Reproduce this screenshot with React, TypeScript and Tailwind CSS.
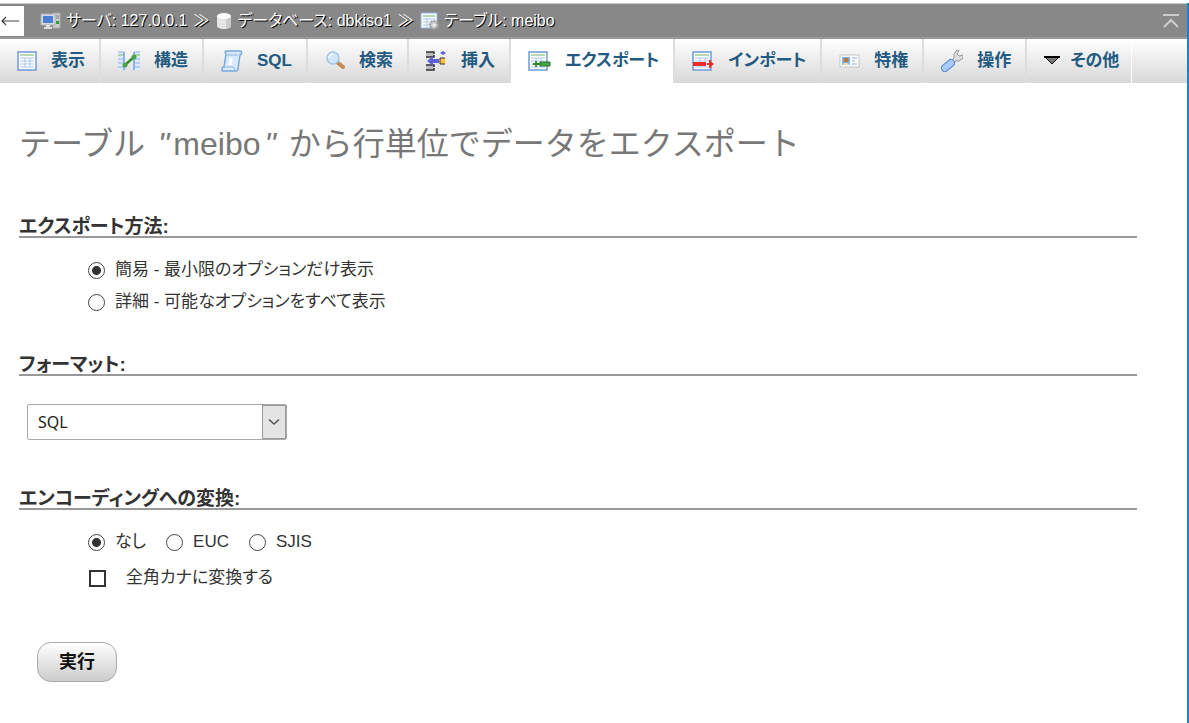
import React, { useState } from "react";

const TABS = [
  { label: "表示", icon: <BrowseIcon /> },
  { label: "構造", icon: <StructureIcon /> },
  { label: "SQL", icon: <SqlIcon /> },
  { label: "検索", icon: <SearchIcon /> },
  { label: "挿入", icon: <InsertIcon /> },
  { label: "エクスポート", icon: <ExportIcon />, active: true },
  { label: "インポート", icon: <ImportIcon /> },
  { label: "特権", icon: <PrivilegesIcon /> },
  { label: "操作", icon: <WrenchIcon /> },
];

const METHODS = [
  { value: "quick", label: "簡易 - 最小限のオプションだけ表示" },
  { value: "custom", label: "詳細 - 可能なオプションをすべて表示" },
];

const ENCODINGS = [
  { value: "none", label: "なし" },
  { value: "euc", label: "EUC" },
  { value: "sjis", label: "SJIS" },
];

export default function App() {
  const [method, setMethod] = useState("quick");
  const [format, setFormat] = useState("sql");
  const [encoding, setEncoding] = useState("none");
  const [kana, setKana] = useState(false);

  return (
    <div className="min-h-screen border-r-2 border-[#1c83c4] bg-white font-['Liberation_Sans','Noto_Sans_CJK_JP',sans-serif] text-[#333]">
      <Breadcrumb />
      <TabBar />

      <form onSubmit={(e) => e.preventDefault()} className="pt-[41px] pr-[50px] pb-9 pl-[19px]">
        <h1 className="text-[32px] leading-10 text-[#777]">
          テーブル <i className="px-1">"</i>
          meibo
          <i className="px-1">"</i> から行単位でデータをエクスポート
        </h1>

        <Section title="エクスポート方法:" className="mt-12">
          <div className="flex flex-col pt-4 pl-[69px]">
            {METHODS.map((m) => (
              <Radio
                key={m.value}
                name="method"
                label={m.label}
                checked={method === m.value}
                onChange={() => setMethod(m.value)}
              />
            ))}
          </div>
        </Section>

        <Section title="フォーマット:" className="mt-8">
          <div className="relative mt-7 ml-2 w-65">
            <select
              aria-label="フォーマット"
              value={format}
              onChange={(e) => setFormat(e.target.value)}
              className="h-9 w-full appearance-none rounded-xs border border-[#aaa] bg-white px-2.5 font-['Noto_Sans',sans-serif] text-base text-[#222]"
            >
              <option value="sql">SQL</option>
              <option value="csv">CSV</option>
            </select>
            <span className="pointer-events-none absolute top-px right-px flex h-8.5 w-6 items-center justify-center border border-[#999] bg-[#e4e4e4]">
              <svg width="12" height="8" viewBox="0 0 12 8" fill="none" stroke="#555" strokeWidth="1.6">
                <path d="M1 1.5 6 6l5-4.5" />
              </svg>
            </span>
          </div>
        </Section>

        <Section title="エンコーディングへの変換:" className="mt-11">
          <div className="flex gap-5 pt-4 pl-[69px]">
            {ENCODINGS.map((enc) => (
              <Radio
                key={enc.value}
                name="encoding"
                label={enc.label}
                checked={encoding === enc.value}
                onChange={() => setEncoding(enc.value)}
              />
            ))}
          </div>
          <label className="mt-1 flex h-8 items-center gap-5 pl-[69px] text-[17px] [font-feature-settings:'palt']">
            <input
              type="checkbox"
              checked={kana}
              onChange={(e) => setKana(e.target.checked)}
              className="ml-px size-[17px] appearance-none border-2 border-[#333] bg-white checked:bg-[#333]"
            />
            全角カナに変換する
          </label>
        </Section>

        <button
          type="submit"
          className="mt-12 ml-4.5 h-10 w-20 rounded-[14px] border border-[#aaa] bg-linear-to-b from-white to-[#ccc] text-[18px] font-bold text-[#111]"
        >
          実行
        </button>
      </form>
    </div>
  );
}

function Breadcrumb() {
  return (
    <header className="mt-[3px] flex h-9 items-center border-t border-b-2 border-t-[#ccc] border-b-[#999] bg-[#888] pr-2 text-base text-white [font-feature-settings:'palt'] [text-shadow:1px_1px_0_#000]">
      <button type="button" aria-label="戻る" className="flex h-[30px] w-6 items-center bg-white">
        <svg width="20" height="10" viewBox="0 0 20 10" fill="none" stroke="#444" strokeWidth="1.2">
          <path d="M19 5H2M6 1 2 5l4 4" />
        </svg>
      </button>
      <nav className="ml-4 flex items-center gap-1.5 whitespace-nowrap">
        <a href="#server" className="flex items-center gap-1">
          <ServerIcon />
          サーバ: 127.0.0.1
        </a>
        <span>≫</span>
        <a href="#database" className="flex items-center gap-1">
          <DatabaseIcon />
          データベース: dbkiso1
        </a>
        <span>≫</span>
        <a href="#table" className="flex items-center gap-1">
          <TableIcon />
          テーブル: meibo
        </a>
      </nav>
      <button type="button" aria-label="上へ" className="ml-auto">
        <svg width="16" height="16" viewBox="0 0 16 16" fill="none" stroke="#ccc" strokeWidth="2">
          <path d="M0 2h16M1 14l7-7 7 7" />
        </svg>
      </button>
    </header>
  );
}

function TabBar() {
  return (
    <nav className="flex h-11 bg-linear-to-b from-white to-[#d8d8d8] text-[17px] font-bold whitespace-nowrap text-[#235a81] [font-feature-settings:'palt']">
      {TABS.map((tab) => (
        <a
          key={tab.label}
          href="#tab"
          className={`flex items-center gap-3.5 border-r-2 border-[#ddd] pr-3.5 pl-[17px] ${
            tab.active ? "bg-white" : ""
          }`}
        >
          {tab.icon}
          {tab.label}
        </a>
      ))}
      <a href="#more" className="flex items-center gap-2.5 border-r border-white pr-3 pl-[17px]">
        <svg width="16" height="10" viewBox="0 0 16 10">
          <path d="M1 1h14L8 8z" fill="#777" stroke="#111" />
          <path d="M0 1h16" stroke="#000" strokeWidth="2" />
        </svg>
        その他
      </a>
    </nav>
  );
}

function Section({
  title,
  className,
  children,
}: {
  title: string;
  className: string;
  children: React.ReactNode;
}) {
  return (
    <section className={className}>
      <h2 className="border-b-2 border-[#999] pt-1.5 text-[19px] leading-[18px] font-bold [font-feature-settings:'palt']">
        {title}
      </h2>
      {children}
    </section>
  );
}

function Radio({
  name,
  label,
  checked,
  onChange,
}: {
  name: string;
  label: string;
  checked: boolean;
  onChange: () => void;
}) {
  return (
    <label className="flex h-8 items-center gap-2.5 text-[17px] [font-feature-settings:'palt']">
      <input
        type="radio"
        name={name}
        checked={checked}
        onChange={onChange}
        className="size-[17px] appearance-none rounded-full border border-[#444] bg-white checked:bg-[radial-gradient(circle,#333_4px,#fff_5px)]"
      />
      {label}
    </label>
  );
}

function ServerIcon() {
  return (
    <svg width="22" height="20" viewBox="0 0 22 20">
      <path d="M13 2h7v15h-7z" fill="#ccc" stroke="#aaa" />
      <path d="M16 5h3M16 7h3" stroke="#888" />
      <path d="M16 10h3v3h-3z" fill="#3c9a3c" />
      <path d="M1 3h14v11H1z" fill="#d5dbe6" stroke="#b0b0b0" />
      <path d="M3 5h10v7H3z" fill="#4b7fd4" />
      <path d="M6 14h4v2h2v2H4v-2h2z" fill="#ddd" />
    </svg>
  );
}

function DatabaseIcon() {
  return (
    <svg width="18" height="18" viewBox="0 0 18 18">
      <path d="M2 4v10c0 4 14 4 14 0V4z" fill="#e6e6e6" />
      <path d="M11 5v11c3 0 5-1 5-2V4z" fill="#ccc" />
      <ellipse cx="9" cy="4" rx="7" ry="3" fill="#fff" />
    </svg>
  );
}

function TableIcon() {
  return (
    <svg width="20" height="20" viewBox="0 0 20 20">
      <path d="M1 2h16v15H1z" fill="#fff" stroke="#8fb3df" />
      <path d="M3 5h12" stroke="#6cae5c" />
      <path d="M3 8h12M3 11h12M3 14h12M7 7v9" stroke="#a5c4ec" />
      <circle cx="14" cy="14" r="4" fill="#ccc" stroke="#999" strokeWidth="2" strokeDasharray="2 1" />
      <circle cx="14" cy="14" r="1.5" fill="#eee" />
    </svg>
  );
}

function Sheet() {
  return (
    <>
      <path d="M1 1h18v18H1z" fill="#fff" stroke="#6f9bd8" strokeWidth="1.5" />
      <path d="M3 4h14" stroke="#75b660" />
      <path d="M3 7h14M3 10h14M3 13h14M3 16h14M8 7v9M13 7v9" stroke="#a9c8ef" />
    </>
  );
}

function BrowseIcon() {
  return (
    <svg width="20" height="20" viewBox="0 0 20 20">
      <Sheet />
    </svg>
  );
}

function StructureIcon() {
  return (
    <svg width="22" height="20" viewBox="0 0 22 20">
      <path d="M0 1h6v18H0zM16 1h6v18h-6z" fill="#dceafb" />
      <path d="M6 1v18M16 1v18" stroke="#8db4ea" strokeWidth="2" />
      <path d="M0 4h6M16 4h6" stroke="#75b660" />
      <path d="M0 1h6M16 1h6M0 8h5M0 12h5M0 16h5M17 8h5M17 12h5M17 16h5" stroke="#8db4ea" />
      <path d="m7 14 9-8" stroke="#368a36" strokeWidth="2.5" />
      <circle cx="7" cy="14" r="2.5" fill="#4da34d" />
      <circle cx="16" cy="6" r="2.5" fill="#4da34d" />
    </svg>
  );
}

function SqlIcon() {
  return (
    <svg width="22" height="22" viewBox="0 0 22 22">
      <path d="M5 1h14c2 0 2 4 0 4l-2 14c0 1-1 2-2 2H2c-2 0-1-3 0-4l1 0L5 4C4 3 4 1 5 1z" fill="#d8e9fb" stroke="#7ba8dd" strokeWidth="1.5" />
      <path d="M6 5h11M3 17h9c2 0 2 3 1 4" fill="none" stroke="#8fb6e4" />
      <path d="m10 8-1 7" stroke="#fff" strokeWidth="3" />
    </svg>
  );
}

function SearchIcon() {
  return (
    <svg width="20" height="20" viewBox="0 0 20 20">
      <path d="m13 12 5 4" stroke="#c58b55" strokeWidth="4" strokeLinecap="round" />
      <circle cx="8" cy="7" r="6" fill="#cfe6fb" stroke="#a5c5e8" strokeWidth="1.5" />
      <path d="M4 7c0-2 2-4 4-4" fill="none" stroke="#fff" strokeWidth="1.5" />
    </svg>
  );
}

function InsertIcon() {
  return (
    <svg width="21" height="20" viewBox="0 0 21 20">
      <path d="M0 1h8v5H0zM0 14h8v5H0z" fill="#bbb" />
      <path d="M0 1h8v2M8 4v2H0M0 14h8v2M8 17v2H0" fill="none" stroke="#333" strokeWidth="1.5" />
      <path d="m1 10 6-5v3h6v4H7v3z" fill="#6060d6" />
      <path d="M14 7h5v6h-5z" fill="#ffc62e" />
      <path d="M19 7h-5v6h5" fill="none" stroke="#333" />
      <path d="m17 0 3 2-3 2-3-2z" fill="#6262dc" />
    </svg>
  );
}

function ExportIcon() {
  return (
    <svg width="23" height="20" viewBox="0 0 23 20">
      <Sheet />
      <path d="M12 11h10v4H12z" fill="#4da53f" stroke="#26702a" />
      <path d="M5 13h8M8 10v6" stroke="#2f8a2c" strokeWidth="1.8" />
    </svg>
  );
}

function ImportIcon() {
  return (
    <svg width="22" height="20" viewBox="0 0 22 20">
      <Sheet />
      <path d="M1 13h13" stroke="#ee2a2a" strokeWidth="4" />
      <path d="M15 13h6M18 9v8" stroke="#ee2a2a" strokeWidth="2" />
      <path d="m18 10 4 3-4 3z" fill="#ee2a2a" />
    </svg>
  );
}

function PrivilegesIcon() {
  return (
    <svg width="21" height="14" viewBox="0 0 21 14">
      <path d="M1 1h19v12H1z" fill="#fff" stroke="#c4c4c4" />
      <path d="M3 3h8v8H3z" fill="#78b3ee" />
      <circle cx="7" cy="6" r="2.5" fill="#b77b42" />
      <path d="M4 11c0-3 6-3 6 0z" fill="#f2dcae" />
      <path d="M13 4h5M13 7h3M13 10h5" stroke="#8aa9cc" />
    </svg>
  );
}

function WrenchIcon() {
  return (
    <svg width="22" height="22" viewBox="0 0 22 22">
      <path d="M9 12 13 8V4l3-4h2l-2 4 2 2 4-1v3l-4 3h-4l-3 4z" fill="#ddd" stroke="#999" />
      <path d="m4 18 6-5" stroke="#5384cf" strokeWidth="8" strokeLinecap="round" />
      <path d="m4 18 6-5" stroke="#a8c9fb" strokeWidth="6" strokeLinecap="round" />
    </svg>
  );
}
